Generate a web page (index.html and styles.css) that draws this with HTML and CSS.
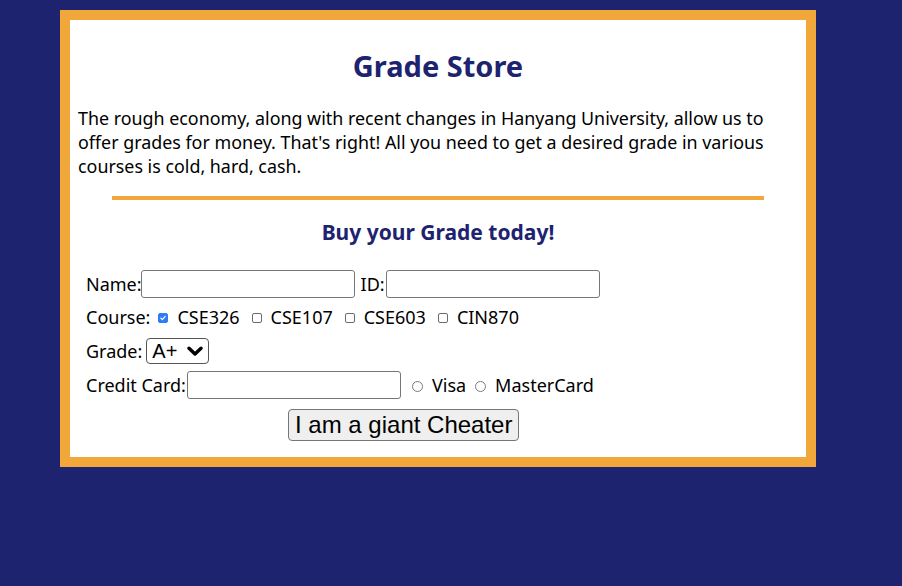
FILE: index.html
```html
<!DOCTYPE html>
<html lang="en">
<head>
<meta charset="utf-8">
<title>Grade Store</title>
<link rel="stylesheet" href="styles.css">
</head>
<body>
<div class="store">
  <h1 class="title">Grade Store</h1>
  <p class="intro">The rough economy, along with recent changes in Hanyang University, allow us to offer grades for money. That's right! All you need to get a desired grade in various courses is cold, hard, cash.</p>
  <hr class="divider">
  <h2 class="subtitle">Buy your Grade today!</h2>
  <form class="order">
    <div class="row row-name">
      <label class="lbl" for="name">Name:</label><input class="field field-name" id="name" type="text">
      <label class="lbl lbl-id" for="sid">ID:</label><input class="field field-id" id="sid" type="text">
    </div>
    <div class="row">
      <span class="lbl">Course:</span>
      <label class="opt opt-first"><input class="box" type="checkbox" checked><span>CSE326</span></label>
      <label class="opt"><input class="box" type="checkbox"><span>CSE107</span></label>
      <label class="opt"><input class="box" type="checkbox"><span>CSE603</span></label>
      <label class="opt"><input class="box" type="checkbox"><span>CIN870</span></label>
    </div>
    <div class="row">
      <label class="lbl" for="grade">Grade:</label>
      <span class="select-wrap">
        <select class="select" id="grade">
          <option>A+</option><option>A</option><option>B+</option><option>B</option>
        </select>
        <svg class="chev" width="16" height="12" viewBox="0 0 16 12"><path d="M2 3.2 L8 9 L14 3.2" fill="none" stroke="#000" stroke-width="3.4" stroke-linecap="round" stroke-linejoin="round"/></svg>
      </span>
    </div>
    <div class="row">
      <label class="lbl" for="cc">Credit Card:</label><input class="field field-cc" id="cc" type="text">
      <label class="opt opt-radio-first"><input class="radio" type="radio" name="card"><span>Visa</span></label>
      <label class="opt opt-radio"><input class="radio" type="radio" name="card"><span>MasterCard</span></label>
    </div>
    <div class="row-btn">
      <button class="cheat" type="button">I am a giant Cheater</button>
    </div>
  </form>
</div>
</body>
</html>
```
FILE: styles.css
```css
html, body {
  margin: 0;
  padding: 0;
}
body {
  background: #1e2370;
  font-family: "Noto Sans", "Noto Sans CJK KR", sans-serif;
  color: #000;
  min-height: 586px;
}
.store {
  width: 720px;
  margin: 10px 0 0 60px;
  padding: 28px 8px 16px;
  border: 10px solid #f2a73b;
  background: #fff;
}
.title {
  margin: 0;
  text-align: center;
  font-size: 29px;
  line-height: 36px;
  font-weight: 700;
  color: #1e2370;
}
.intro {
  margin: 22px 0 0;
  font-size: 17.87px;
  line-height: 24px;
}
.divider {
  width: 652px;
  height: 0;
  margin: 18px auto 0;
  border: 0;
  border-top: 4px solid #f2a73b;
}
.subtitle {
  margin: 18px 0 0;
  text-align: center;
  font-size: 21px;
  line-height: 28px;
  font-weight: 700;
  color: #1e2370;
}
.order {
  margin: 21px 0 0 8px;
}
.row {
  display: flex;
  align-items: center;
  height: 34px;
  font-size: 18px;
}
.row-name {
  margin-bottom: -1px;
}
.lbl {
  white-space: nowrap;
}
.lbl-id {
  margin-left: 6px;
}
.field {
  box-sizing: border-box;
  width: 214px;
  height: 28px;
  margin: 0;
  padding: 0 4px;
  border: 1px solid #767676;
  border-radius: 3px;
  background: #fff;
  font-size: 16px;
}
.field-name {
  margin-left: -1px;
}
.field-id {
  margin-left: 1px;
}
.field-cc {
  margin-left: 1px;
}
.opt {
  display: flex;
  align-items: center;
  margin-left: 12px;
}
.opt-first {
  margin-left: 8px;
}
.opt-radio-first {
  margin-left: 11px;
}
.opt-radio {
  margin-left: 9px;
}
.box {
  appearance: none;
  -webkit-appearance: none;
  box-sizing: border-box;
  width: 10px;
  height: 10px;
  margin: 1px 9px 0 0;
  border: 1px solid #6b6b6b;
  border-radius: 2px;
  background: #fff;
}
.box:checked {
  border-color: #2f7cf6;
  background: #2f7cf6 url("data:image/svg+xml;utf8,<svg xmlns='http://www.w3.org/2000/svg' viewBox='0 0 10 10'><path d='M2.3 5.2 L4.2 7 L7.7 3' fill='none' stroke='white' stroke-width='1.5' stroke-linecap='round' stroke-linejoin='round'/></svg>") center/100% 100% no-repeat;
}
.radio {
  appearance: none;
  -webkit-appearance: none;
  box-sizing: border-box;
  width: 11px;
  height: 11px;
  margin: 2px 9px 0 0;
  border: 1.5px solid #7a7a7a;
  border-radius: 50%;
  background: #fff;
}
.select-wrap {
  position: relative;
  display: inline-flex;
  margin-left: 4px;
}
.select {
  appearance: none;
  -webkit-appearance: none;
  box-sizing: border-box;
  width: 63px;
  height: 26px;
  margin: 0;
  padding: 0 0 0 5px;
  border: 1.5px solid #555;
  border-radius: 4px;
  background: #fff;
  color: #000;
  font-family: "Liberation Sans", Arial, sans-serif;
  font-size: 20px;
  line-height: 22px;
}
.chev {
  position: absolute;
  right: 6px;
  top: 7px;
  pointer-events: none;
}
.row-btn {
  display: flex;
  margin-top: 7px;
  padding-left: 202px;
}
.cheat {
  box-sizing: border-box;
  height: 32px;
  padding: 0 6px;
  border: 1px solid #767676;
  border-radius: 4px;
  background: #efefef;
  color: #000;
  font-family: "Liberation Sans", Arial, sans-serif;
  font-size: 24px;
  line-height: 28px;
}
```
